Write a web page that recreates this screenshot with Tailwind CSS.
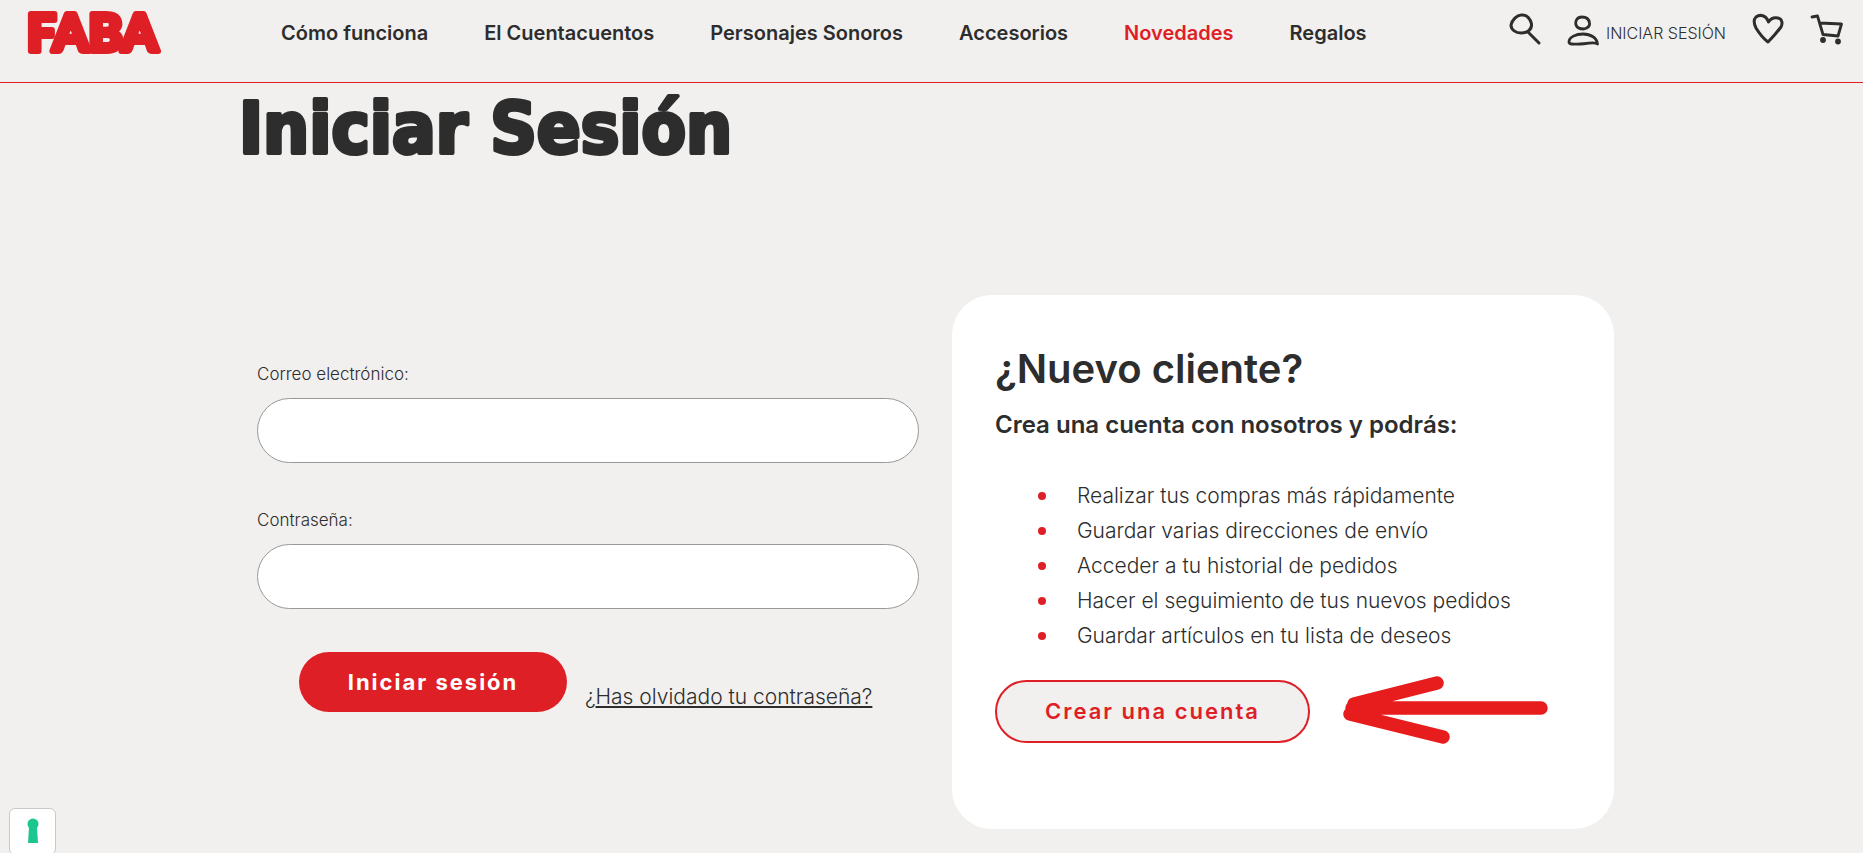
<!DOCTYPE html>
<html lang="es">
<head>
    <meta charset="UTF-8">
    <meta name="viewport" content="width=device-width, initial-scale=1.0">
    <title>Iniciar Sesión - FABA</title>
    <script src="https://cdn.jsdelivr.net/npm/@tailwindcss/browser@4"></script>
</head>
<body class="bg-[#f1f0ee] min-h-screen overflow-x-hidden font-['Inter','Open_Sans',sans-serif] text-[#2d2d2d]">
    <header class="flex items-start h-[83px] border-b border-[#df1f26] pl-6 pr-5">
        <a href="#" aria-label="FABA" class="mr-[97px] shrink-0">
            <svg width="160" height="66" viewBox="0 0 160 66" fill="#df1f26" stroke="#df1f26" stroke-width="6" stroke-linejoin="round" font-family="Lato, sans-serif" font-weight="900" font-size="51">
                <text x="3" y="51">FABA</text>
            </svg>
        </a>
        <nav class="flex gap-14 mt-[18px] text-[20px] leading-[30px] font-semibold whitespace-nowrap">
            <a href="#" class="hover:underline">Cómo funciona</a>
            <a href="#" class="hover:underline">El Cuentacuentos</a>
            <a href="#" class="hover:underline">Personajes Sonoros</a>
            <a href="#" class="hover:underline">Accesorios</a>
            <a href="#" class="text-[#df1f26] hover:underline">Novedades</a>
            <a href="#" class="hover:underline">Regalos</a>
        </nav>
        <div class="flex items-start ml-auto mt-3 shrink-0">
            <button type="button" aria-label="Buscar" class="mr-[26px]">
                <svg width="32" height="34" viewBox="0 0 32 34" fill="none" stroke="#2d2d2d" stroke-width="3" stroke-linecap="round" stroke-linejoin="round">
                    <path d="M12 3C8 3 3 8 2 13C2 18 7 21 12 21C18 21 23 18 22.500 12C22 8 18 2 12 3ZM19 20L30 31"/>
                </svg>
            </button>
            <a href="#" class="flex items-start mr-[26px]">
                <svg class="mt-0.5" width="32" height="32" viewBox="0 0 32 32" fill="none" stroke="#2d2d2d" stroke-width="2.800" stroke-linecap="round" stroke-linejoin="round">
                    <path d="M15 3C10 3 8 7 9 11C10 14 13 15 17 15C21 14 23 12 22.500 9C22 5 19 3 15 3ZM2 28C2 23 9 20 16 20C24 20 30 24 30.500 30C27 27 22 30 13 30C8 30 2 31 2 28Z"/>
                </svg>
                <span class="ml-[7px] mt-1.5 text-[16px] leading-[30px] font-light whitespace-nowrap">INICIAR SESIÓN</span>
            </a>
            <button type="button" aria-label="Lista de deseos" class="mr-[26px]">
                <svg width="32" height="33" viewBox="0 0 32 33" fill="none" stroke="#2d2d2d" stroke-width="3" stroke-linecap="round" stroke-linejoin="round">
                    <path d="M16.500 10C14 3 8 2 4 5C1 8 2 12 4 16C7 21 12 27 16 30C20 26 26 19 29 15C31 11 30 7 26 6C22 5 19 6 16.500 10Z"/>
                </svg>
            </button>
            <button type="button" aria-label="Carrito">
                <svg width="33" height="34" viewBox="0 0 33 34" fill="none" stroke="#2d2d2d" stroke-width="2.800" stroke-linecap="round" stroke-linejoin="round">
                    <path d="M2 5L7.500 4L13 22.500L28 24L31.500 12L10 11"/>
                    <circle cx="13" cy="28" r="1.500"/>
                    <circle cx="28" cy="29.500" r="1.500"/>
                </svg>
            </button>
        </div>
    </header>

    <main class="px-[243px]">
        <h1>
            <svg class="overflow-visible" width="500" height="80" viewBox="0 0 500 80" fill="#2d2d2d" stroke="#2d2d2d" stroke-width="4" stroke-linejoin="round" font-family="'DejaVu Sans Condensed', Lato, sans-serif" font-weight="700" font-size="72">
                <text x="-4" y="70">Iniciar Sesión</text>
            </svg>
        </h1>

        <div class="grid grid-cols-2 gap-[33px] mt-[132px] pl-3.5 pr-1.5">
            <form class="pt-16" onsubmit="return false">
                <label for="email" class="block text-[17px] leading-[30px] font-light">Correo electrónico:</label>
                <input id="email" type="email" class="block mt-[9px] w-full h-[65px] px-8 bg-white border border-[#999] rounded-full">
                <label for="password" class="block mt-[42px] text-[17px] leading-[30px] font-light">Contraseña:</label>
                <input id="password" type="password" class="block mt-[9px] w-full h-[65px] px-8 bg-white border border-[#999] rounded-full">
                <div class="flex items-start mt-[43px] ml-[42px] whitespace-nowrap">
                    <button type="submit" class="w-[268px] h-[60px] rounded-full bg-[#df1f26] text-white text-[22px] font-bold tracking-[2px]">Iniciar sesión</button>
                    <p class="mt-[30px] ml-[18px] text-[21px] leading-[30px] font-light">¿<a href="#" class="underline">Has olvidado tu contraseña?</a></p>
                </div>
            </form>

            <section class="px-[43px] pt-[46px] pb-[86px] bg-white rounded-[40px]">
                <h2 class="text-[40px] leading-[56px] font-semibold">¿Nuevo cliente?</h2>
                <p class="mt-2 text-[24px] leading-[40px] font-semibold">Crea una cuenta con nosotros y podrás:</p>
                <ul class="mt-[33px] pl-[43px] text-[21px] leading-[35px] font-light whitespace-nowrap">
                    <li class="flex items-center gap-[31px]"><span class="size-2 rounded-full bg-[#df1f26]"></span>Realizar tus compras más rápidamente</li>
                    <li class="flex items-center gap-[31px]"><span class="size-2 rounded-full bg-[#df1f26]"></span>Guardar varias direcciones de envío</li>
                    <li class="flex items-center gap-[31px]"><span class="size-2 rounded-full bg-[#df1f26]"></span>Acceder a tu historial de pedidos</li>
                    <li class="flex items-center gap-[31px]"><span class="size-2 rounded-full bg-[#df1f26]"></span>Hacer el seguimiento de tus nuevos pedidos</li>
                    <li class="flex items-center gap-[31px]"><span class="size-2 rounded-full bg-[#df1f26]"></span>Guardar artículos en tu lista de deseos</li>
                </ul>
                <div class="flex items-start gap-8 mt-[27px] h-[63px]">
                    <button type="button" class="w-[315px] h-[63px] rounded-full border-2 border-[#df1f26] bg-[#f1f0ee] text-[#df1f26] text-[22px] font-semibold tracking-[2px] whitespace-nowrap">Crear una cuenta</button>
                    <svg class="-mt-1" width="207" height="70" viewBox="0 0 207 70" fill="none" stroke="#e71c1c" stroke-width="13.500" stroke-linecap="round">
                        <path d="M95 7L12 28M10 32H199M8 38L101 61"/>
                    </svg>
                </div>
            </section>
        </div>
    </main>

    <button type="button" aria-label="Privacidad" class="fixed left-[9px] bottom-[-2px] flex justify-center items-center w-[47px] h-[47px] bg-white border border-[#c8c8c8] rounded-md">
        <svg class="-mt-0.5" width="12" height="26" viewBox="0 0 12 26" fill="#1cc691">
            <circle cx="6" cy="6" r="5.500"/>
            <path d="M2 9H10L11 25H1Z"/>
        </svg>
    </button>
</body>
</html>
